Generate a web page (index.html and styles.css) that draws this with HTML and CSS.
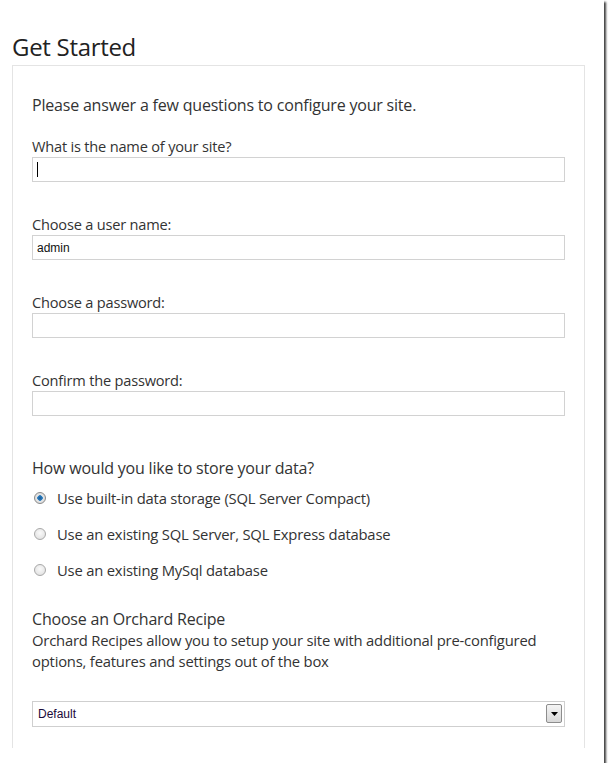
FILE: index.html
```html
<!DOCTYPE html>
<html>
<head>
<meta charset="utf-8">
<link rel="stylesheet" href="styles.css">
</head>
<body>
<div class="frame">
  <h1 class="title">Get Started</h1>
  <div class="card">
    <p class="intro">Please answer a few questions to configure your site.</p>
    <div class="field">
      <label class="label">What is the name of your site?</label>
      <div class="input-wrap">
        <input class="input" type="text" value="">
        <span class="caret"></span>
      </div>
    </div>
    <div class="field">
      <label class="label">Choose a user name:</label>
      <input class="input" type="text" value="admin">
    </div>
    <div class="field">
      <label class="label">Choose a password:</label>
      <input class="input" type="password" value="">
    </div>
    <div class="field">
      <label class="label">Confirm the password:</label>
      <input class="input" type="password" value="">
    </div>
    <h2 class="section">How would you like to store your data?</h2>
    <div class="radios">
      <label class="radio-row"><input class="radio" type="radio" name="db" checked><span>Use built-in data storage (SQL Server Compact)</span></label>
      <label class="radio-row"><input class="radio" type="radio" name="db"><span>Use an existing SQL Server, SQL Express database</span></label>
      <label class="radio-row"><input class="radio" type="radio" name="db"><span>Use an existing MySql database</span></label>
    </div>
    <h2 class="section recipe">Choose an Orchard Recipe</h2>
    <p class="desc">Orchard Recipes allow you to setup your site with additional pre-configured options, features and settings out of the box</p>
    <div class="select-wrap">
      <select class="select"><option>Default</option></select>
      <span class="select-btn"><svg width="7" height="4" viewBox="0 0 7 4"><path d="M0 0H7L3.5 4Z" fill="#000"/></svg></span>
    </div>
  </div>
</div>
</body>
</html>
```
FILE: styles.css
```css
html, body {
  margin: 0;
  padding: 0;
  background: #fff;
}
.frame {
  width: 604px;
  height: 763px;
  box-sizing: border-box;
  background: #fff;
  box-shadow: 2px 2px 2px rgba(0,0,0,0.75);
  display: flex;
  flex-direction: column;
  font-family: "Open Sans", "Noto Sans", sans-serif;
  color: #333;
  overflow: hidden;
}
.title {
  margin: 32px 0 0 12px;
  font-size: 24px;
  line-height: 30px;
  font-weight: 400;
  color: #222;
  letter-spacing: -0.3px;
}
.card {
  margin: 3px 0 0 12px;
  width: 573px;
  height: 683px;
  box-sizing: border-box;
  border: 1px solid #e4e4e4;
  border-bottom: none;
  padding: 0 19px;
  display: flex;
  flex-direction: column;
}
.intro {
  margin: 28px 0 0 0;
  font-size: 16px;
  line-height: 22px;
  letter-spacing: -0.2px;
}
.field {
  display: flex;
  flex-direction: column;
  gap: 1px;
  margin-top: 20px;
}
.field + .field {
  margin-top: 32px;
}
.label {
  font-size: 14.6px;
  line-height: 20px;
  letter-spacing: -0.2px;
}
.input-wrap {
  position: relative;
  display: flex;
}
.input {
  width: 100%;
  height: 25px;
  box-sizing: border-box;
  border: 1px solid #d2d2d2;
  padding: 0 4px;
  font-family: "Liberation Sans", Arial, sans-serif;
  font-size: 12px;
  color: #111;
  outline: none;
}
.caret {
  position: absolute;
  left: 5px;
  top: 5px;
  width: 1px;
  height: 15px;
  background: #000;
}
.section {
  margin: 41px 0 0 0;
  font-size: 16px;
  line-height: 22px;
  font-weight: 400;
  letter-spacing: -0.2px;
}
.radios {
  display: flex;
  flex-direction: column;
  gap: 14px;
  margin-top: 8px;
}
.radio-row {
  display: flex;
  align-items: center;
  gap: 11px;
  font-size: 14.8px;
  line-height: 22px;
  letter-spacing: -0.2px;
}
.radio {
  appearance: none;
  -webkit-appearance: none;
  margin: 0 0 0 2px;
  width: 12px;
  height: 12px;
  border-radius: 50%;
  border: 1px solid #a8a8a8;
  background: radial-gradient(circle at 50% 40%, #fafafa 0%, #dcdcdc 100%);
  box-sizing: border-box;
  position: relative;
  flex: none;
}
.radio:checked {
  border-color: #8a8a8a;
  background: radial-gradient(circle, #1a5a96 0, #2f7fc0 2.5px, #e8e8e8 3px, #d0d0d0 100%);
}
.recipe {
  margin-top: 27px;
}
.desc {
  margin: 0;
  font-size: 14.8px;
  line-height: 21px;
  letter-spacing: -0.2px;
}
.select-wrap {
  position: relative;
  margin-top: 29px;
  display: flex;
}
.select {
  appearance: none;
  -webkit-appearance: none;
  width: 100%;
  height: 26px;
  box-sizing: border-box;
  border: 1px solid #cfcfcf;
  background: #fff;
  padding: 0 5px;
  font-family: "Liberation Sans", Arial, sans-serif;
  font-size: 12px;
  color: #1a0a3a;
  outline: none;
}
.select-btn {
  position: absolute;
  right: 3px;
  top: 3px;
  width: 16px;
  height: 19px;
  box-sizing: border-box;
  border: 1px solid #8d8d8d;
  border-radius: 2px;
  background: linear-gradient(#f4f4f4, #d8d8d8);
  display: flex;
  align-items: center;
  justify-content: center;
}
```
